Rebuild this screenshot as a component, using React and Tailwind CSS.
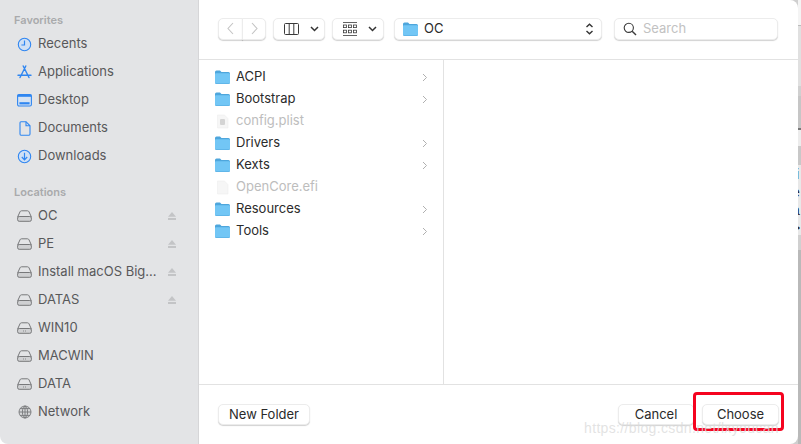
const favorites = [
  { name: "Recents", icon: <ClockIcon /> },
  { name: "Applications", icon: <AppsIcon /> },
  { name: "Desktop", icon: <DesktopIcon /> },
  { name: "Documents", icon: <DocIcon /> },
  { name: "Downloads", icon: <DownloadIcon /> },
];

const locations = [
  { name: "OC", eject: true },
  { name: "PE", eject: true },
  { name: "Install macOS Big...", eject: true },
  { name: "DATAS", eject: true },
  { name: "WIN10", dots: true },
  { name: "MACWIN", dots: true },
  { name: "DATA", dots: true },
];

const files = [
  { name: "ACPI", folder: true },
  { name: "Bootstrap", folder: true },
  { name: "config.plist", icon: "plist" },
  { name: "Drivers", folder: true },
  { name: "Kexts", folder: true },
  { name: "OpenCore.efi", icon: "file" },
  { name: "Resources", folder: true },
  { name: "Tools", folder: true },
];

export default function App() {
  return (
    <div className="relative flex w-[801px] h-[444px] overflow-hidden bg-[#cfcfcf] font-['Inter','Liberation_Sans',sans-serif] text-[13px]">
      <div className="flex w-[798px] h-full rounded-r-[8px] overflow-hidden bg-white">
        {/* sidebar */}
        <div className="w-[199px] shrink-0 bg-[#e3e4e6] border-r border-[#d6d6d8] rounded-bl-[8px] pt-[13px] text-[#58585a]">
          <SectionTitle>Favorites</SectionTitle>
          <div className="mt-[3px]">
            {favorites.map((f) => (
              <SideRow key={f.name} name={f.name} icon={f.icon} />
            ))}
          </div>
          <div className="mt-[15px]">
            <SectionTitle>Locations</SectionTitle>
          </div>
          <div className="mt-[3px]">
            {locations.map((l) => (
              <SideRow key={l.name} name={l.name} icon={<DriveIcon dots={l.dots} />} eject={l.eject} />
            ))}
            <SideRow name="Network" icon={<GlobeIcon />} />
          </div>
        </div>

        {/* main */}
        <div className="flex-1 flex flex-col min-w-0">
          <div className="h-[60px] shrink-0 border-b border-[#e2e2e2] flex items-center pl-[19px] pb-[2px]">
            <div className="flex">
              <Btn className="w-[25px] h-[22px] justify-center rounded-r-none">
                <Chevron d="M8 2 L3 7.5 L8 13" />
              </Btn>
              <Btn className="w-[24px] h-[22px] justify-center rounded-l-none -ml-px">
                <Chevron d="M3 2 L8 7.5 L3 13" />
              </Btn>
            </div>
            <Btn className="ml-[7px] w-[52px] h-[22px] pl-[10px]">
              <ColumnsIcon />
              <SmallDown className="ml-[11px]" />
            </Btn>
            <Btn className="ml-[7px] w-[52px] h-[22px] pl-[10px]">
              <GridIcon />
              <SmallDown className="ml-[11px]" />
            </Btn>
            <Btn className="ml-[10px] w-[208px] h-[22px] pl-[8px] pr-[7px] justify-between">
              <span className="flex items-center gap-[6px] text-[#2a2a2a]">
                <FolderIcon />
                OC
              </span>
              <UpDown />
            </Btn>
            <Btn className="ml-[12px] w-[164px] h-[22px] pl-[8px] gap-[6px]">
              <SearchIcon />
              <span className="text-[#c2c2c2]">Search</span>
            </Btn>
          </div>

          <div className="flex-1 flex min-h-0">
            <div className="w-[245px] border-r border-[#e2e2e2] pt-[6px]">
              {files.map((f) => (
                <div key={f.name} className="h-[22px] flex items-center pl-[16px] pr-[15px]">
                  {f.folder ? <FolderIcon /> : <FileIcon plist={f.icon === "plist"} />}
                  <span className={`ml-[6px] flex-1 ${f.folder ? "text-[#2b2b2b]" : "text-[#bdbdbd]"}`}>{f.name}</span>
                  {f.folder && <RowArrow />}
                </div>
              ))}
            </div>
          </div>

          <div className="h-[60px] shrink-0 border-t border-[#e2e2e2] flex items-center pl-[19px] pr-[19px] pb-[1px]">
            <Btn className="w-[92px] h-[21px] justify-center pt-[1px] text-[#2a2a2a]">New Folder</Btn>
            <div className="ml-auto flex gap-[8px]">
              <Btn className="w-[76px] h-[21px] justify-center pt-[1px] text-[#2a2a2a]">Cancel</Btn>
              <Btn className="w-[77px] h-[21px] justify-center pt-[1px] text-[#2a2a2a]">Choose</Btn>
            </div>
          </div>
        </div>
      </div>

      {/* window behind the dialog */}
      <div className="flex-1 flex flex-col overflow-hidden">
        <div className="h-[25px] bg-[#f4f4f4]" />
        <div className="h-[1px] bg-[#bcbcbc]" />
        <div className="h-[60px] bg-[#e0e0e0]" />
        <div className="h-[10px] bg-[#d0d0d0]" />
        <div className="h-[32px] bg-[#c6c6c6]" />
        <div className="h-[2px] bg-[#777777]" />
        <div className="h-[16px] bg-[#ececec]" />
        <div className="h-[19px] bg-[#c8c8c8]" />
        <div className="h-[70px] bg-[#e8e8e8] text-[#222] leading-[18px] font-['Liberation_Sans',sans-serif] text-[14px] -tracking-[0.2px]">
          <div className="-ml-[2px]">i</div>
          <div className="-ml-[6px]">e</div>
          <div className="-ml-[6px]">a</div>
          <div className="-ml-[6px]">&gt;</div>
        </div>
        <div className="h-[15px] bg-[#d0d0d0]" />
        <div className="flex-1 bg-[#b9b9b9]" />
      </div>

      {/* annotation on top of the screenshot */}
      <div className="absolute left-[693px] top-[392px] w-[91px] h-[39px] border-[3px] border-[#f5031f] rounded-[4px]" />
      <div className="absolute left-[584px] top-[418px] text-[14px] tracking-[0.35px] text-[#dcdcdc]/80 whitespace-nowrap font-['Liberation_Sans',sans-serif]">
        https://blog.csdn.net/lxyoucan
      </div>
    </div>
  );
}

function SectionTitle({ children }) {
  return <div className="h-[14px] leading-[14px] pl-[14px] text-[11px] font-semibold text-[#a9aaac]">{children}</div>;
}

function SideRow({ name, icon, eject }) {
  return (
    <div className="h-[28px] flex items-center pl-[17px] pr-[22px]">
      <span className="w-[15px] h-[15px] flex items-center justify-center shrink-0">{icon}</span>
      <span className="ml-[6px] flex-1 whitespace-nowrap">{name}</span>
      {eject && <EjectIcon />}
    </div>
  );
}

function Btn({ className = "", children }) {
  return (
    <div
      className={`flex items-center shrink-0 bg-white rounded-[5px] border border-[#ececec] shadow-[0_1px_1px_rgba(0,0,0,0.18)] ${className}`}
    >
      {children}
    </div>
  );
}

function Chevron({ d }) {
  return (
    <svg width="11" height="15" viewBox="0 0 11 15" fill="none" stroke="#c4c4c4" strokeWidth="1.1">
      <path d={d} />
    </svg>
  );
}

function SmallDown({ className = "" }) {
  return (
    <svg className={className} width="9" height="6" viewBox="0 0 9 6" fill="none" stroke="#333" strokeWidth="1.5">
      <path d="M1 1 L4.5 4.5 L8 1" />
    </svg>
  );
}

function UpDown() {
  return (
    <svg width="9" height="12" viewBox="0 0 9 12" fill="none" stroke="#333" strokeWidth="1.4">
      <path d="M1.5 4 L4.5 1.2 L7.5 4" />
      <path d="M1.5 8 L4.5 10.8 L7.5 8" />
    </svg>
  );
}

function ColumnsIcon() {
  return (
    <svg width="15" height="12" viewBox="0 0 15 12" fill="none" stroke="#3a3a3a" strokeWidth="1">
      <rect x="0.5" y="0.5" width="14" height="11" rx="1" />
      <path d="M5.2 0.5 V11.5 M9.8 0.5 V11.5" />
    </svg>
  );
}

function GridIcon() {
  return (
    <svg width="14" height="14" viewBox="0 0 14 14" fill="none" stroke="#3a3a3a" strokeWidth="0.8">
      <path d="M0 0.5 H14 M0 13.5 H14" />
      <rect x="0.5" y="3" width="3" height="2.6" />
      <rect x="5.5" y="3" width="3" height="2.6" />
      <rect x="10.5" y="3" width="3" height="2.6" />
      <rect x="0.5" y="8.2" width="3" height="2.6" />
      <rect x="5.5" y="8.2" width="3" height="2.6" />
      <rect x="10.5" y="8.2" width="3" height="2.6" />
    </svg>
  );
}

function FolderIcon() {
  return (
    <svg width="15" height="14" viewBox="0 0 15 14" className="shrink-0">
      <path d="M0 2 Q0 0.5 1.5 0.5 H5 L6.5 2 H13.5 Q15 2 15 3.5 V12.5 Q15 14 13.5 14 H1.5 Q0 14 0 12.5 Z" fill="#4ea6dc" />
      <path d="M0 4.2 Q0 3.2 1 3.2 H14 Q15 3.2 15 4.2 V12.5 Q15 13.6 13.8 13.6 H1.2 Q0 13.6 0 12.5 Z" fill="#72c6f5" />
    </svg>
  );
}

function FileIcon({ plist }) {
  return (
    <svg width="15" height="15" viewBox="0 0 15 15" className="shrink-0">
      <path d="M2.5 1 H9.5 L13 4.5 V14 H2.5 Z" fill="#f6f6f6" stroke="#efefef" strokeWidth="0.6" />
      {plist && <rect x="5" y="5" width="5" height="6" rx="1" fill="#d4d4d4" />}
    </svg>
  );
}

function RowArrow() {
  return (
    <svg width="6" height="9" viewBox="0 0 6 9" fill="none" stroke="#b0b0b0" strokeWidth="1" className="shrink-0">
      <path d="M1 1 L4.5 4.5 L1 8" />
    </svg>
  );
}

function SearchIcon() {
  return (
    <svg width="14" height="14" viewBox="0 0 14 14" fill="none" stroke="#3a3a3a" strokeWidth="1.1" className="shrink-0">
      <circle cx="5.8" cy="5.8" r="4.6" />
      <path d="M9.2 9.2 L13 13" strokeWidth="1.4" />
    </svg>
  );
}

function ClockIcon() {
  return (
    <svg width="15" height="15" viewBox="0 0 15 15" fill="none" stroke="#2f86f1" strokeWidth="1.1">
      <circle cx="7.5" cy="7.5" r="6.2" fill="#cfe0f5" />
      <path d="M7.5 3.6 V8 H4.4" strokeWidth="1.2" />
    </svg>
  );
}

function AppsIcon() {
  return (
    <svg width="15" height="15" viewBox="0 0 15 15" fill="none" stroke="#2f86f1" strokeWidth="1.4" strokeLinecap="round">
      <path d="M8.8 1 L3 12.5 M6.2 1 L12 12.5 M1 10.2 H14" />
    </svg>
  );
}

function DesktopIcon() {
  return (
    <svg width="15" height="13" viewBox="0 0 15 13" fill="none" stroke="#2f86f1" strokeWidth="1.1">
      <rect x="0.6" y="0.6" width="13.8" height="11.4" rx="1.4" fill="#d6e3f3" />
      <rect x="0.6" y="0.6" width="13.8" height="2.2" fill="#2f86f1" stroke="none" />
      <rect x="2.4" y="8.2" width="10.2" height="2.2" fill="#2f86f1" stroke="none" />
    </svg>
  );
}

function DocIcon() {
  return (
    <svg width="12" height="15" viewBox="0 0 12 15" fill="none" stroke="#2f86f1" strokeWidth="1.1">
      <path d="M1 1.8 Q1 0.7 2 0.7 H7 L11 4.8 V13 Q11 14.2 10 14.2 H2 Q1 14.2 1 13 Z" />
      <path d="M7 0.7 V4.8 H11" />
    </svg>
  );
}

function DownloadIcon() {
  return (
    <svg width="15" height="15" viewBox="0 0 15 15" fill="none" stroke="#2f86f1" strokeWidth="1.1">
      <circle cx="7.5" cy="7.5" r="6.2" fill="#cfe0f5" />
      <path d="M7.5 3.8 V10.6 M4.8 8 L7.5 10.8 L10.2 8" strokeWidth="1.2" />
    </svg>
  );
}

function DriveIcon({ dots }) {
  return (
    <svg width="15" height="12" viewBox="0 0 15 12" fill="none" stroke="#77787a" strokeWidth="1">
      <path d="M0.6 7 L3 1.8 Q3.4 0.8 4.5 0.8 H10.5 Q11.6 0.8 12 1.8 L14.4 7" />
      <rect x="0.6" y="6.5" width="13.8" height="4.8" rx="1.6" fill={dots ? "#d0d1d3" : "#cfd0d2"} />
      {dots && <path d="M6 9 H6.8 M8 9 H8.8" strokeWidth="1" />}
    </svg>
  );
}

function GlobeIcon() {
  return (
    <svg width="14" height="14" viewBox="0 0 14 14" fill="none" stroke="#77787a" strokeWidth="0.9">
      <circle cx="7" cy="7" r="6" fill="#d6d7d9" />
      <ellipse cx="7" cy="7" rx="2.6" ry="6" />
      <path d="M7 1 V13 M1 7 H13 M2 3.6 H12 M2 10.4 H12" />
    </svg>
  );
}

function EjectIcon() {
  return (
    <svg width="8" height="8" viewBox="0 0 8 8" fill="#c3c4c6" className="shrink-0">
      <path d="M4 0 L8 4.8 H0 Z" />
      <rect x="0" y="6" width="8" height="2" />
    </svg>
  );
}
